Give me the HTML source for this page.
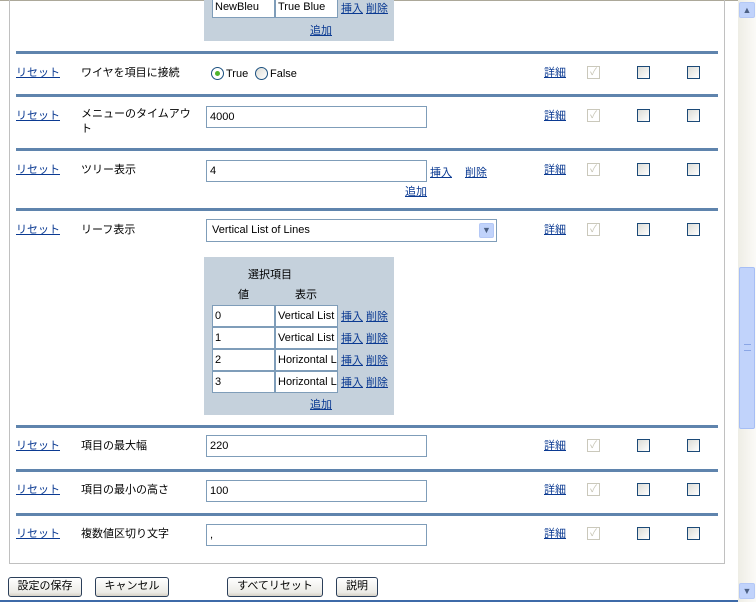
<!DOCTYPE html>
<html><head><meta charset="utf-8"><style>
*{margin:0;padding:0;box-sizing:border-box}
body{width:756px;height:602px;overflow:hidden;background:#fff;font-family:"Liberation Sans","Noto Sans CJK JP",sans-serif;font-size:11px;color:#000;position:relative}
.a{position:absolute;white-space:nowrap}
a,.l{color:#0b3a92;text-decoration:underline}
.sep{position:absolute;left:16px;width:702px;height:3px;background:#5f84ad}
.in{position:absolute;border:1px solid #7f9db9;background:#fff;padding:3px 3px;font-size:11px;height:22px;line-height:14px;overflow:hidden;white-space:nowrap}
.cd{position:absolute;width:13px;height:13px;border:1px solid #cac8bb;background:#fff;color:#c5c2b2;font-size:10px;line-height:11px;text-align:center}
.cb{position:absolute;width:13px;height:13px;border:1px solid #1c4a78;background:linear-gradient(135deg,#dcdcd6,#fff)}
.gt{position:absolute;background:#c5d1dc}
.ti{position:absolute;border:1px solid #7f9db9;background:#fff;height:22px;padding:3px 2px;line-height:14px;overflow:hidden;white-space:nowrap;width:63px}
.btn{position:absolute;top:577px;height:20px;border:1px solid #2b3f5a;border-radius:3px;background:linear-gradient(#fff,#ecebe6 80%,#d6d0c5);font-size:11px;text-align:center;line-height:17px}
</style></head><body>
<div class="a" style="left:0;top:0;width:738px;height:1px;background:#aca899"></div>
<div class="a" style="left:9px;top:0;width:1px;height:563px;background:#c0c0c0"></div>
<div class="a" style="left:724px;top:0;width:1px;height:564px;background:#c0c0c0"></div>
<div class="a" style="left:9px;top:563px;width:716px;height:1px;background:#c0c0c0"></div>

<div class="gt" style="left:204px;top:0;width:190px;height:41px"></div>
<div class="ti" style="left:212px;top:-4px">NewBleu</div>
<div class="ti" style="left:275px;top:-4px">True Blue</div>
<span class="a l" style="left:341px;top:0">挿入</span><span class="a l" style="left:366px;top:0">削除</span>
<span class="a l" style="left:310px;top:22px">追加</span>

<div class="sep" style="top:51px"></div>
<span class="a l" style="left:16px;top:64px">リセット</span>
<span class="a" style="left:81px;top:64px">ワイヤを項目に接続</span>
<div class="a" style="left:211px;top:67px;width:13px;height:13px;border-radius:50%;border:1px solid #1c5180;background:#fff"><div style="position:absolute;left:3px;top:3px;width:5px;height:5px;border-radius:50%;background:#4fb42c"></div></div>
<span class="a" style="left:226px;top:68px">True</span>
<div class="a" style="left:255px;top:67px;width:13px;height:13px;border-radius:50%;border:1px solid #1c5180;background:linear-gradient(135deg,#dcdcd6,#fff)"></div>
<span class="a" style="left:270px;top:68px">False</span>

<div class="sep" style="top:94px"></div>
<span class="a l" style="left:16px;top:107px">リセット</span>
<span class="a" style="left:81px;top:107px;line-height:15px">メニューのタイムアウ<br>ト</span>
<div class="in" style="left:206px;top:106px;width:221px">4000</div>

<div class="sep" style="top:148px"></div>
<span class="a l" style="left:16px;top:161px">リセット</span>
<span class="a" style="left:81px;top:161px">ツリー表示</span>
<div class="in" style="left:206px;top:160px;width:221px">4</div>
<span class="a l" style="left:430px;top:164px">挿入</span><span class="a l" style="left:465px;top:164px">削除</span>
<span class="a l" style="left:405px;top:183px">追加</span>

<div class="sep" style="top:208px"></div>
<span class="a l" style="left:16px;top:221px">リセット</span>
<span class="a" style="left:81px;top:221px">リーフ表示</span>
<div class="in" style="left:206px;top:219px;width:291px;height:23px;padding-left:5px">Vertical List of Lines</div>
<div class="a" style="left:479px;top:223px;width:15px;height:15px;background:#c1d3fb;border:1px solid #b4c8f6;border-radius:2px;color:#4d6185;font-size:9px;text-align:center;line-height:13px">&#9660;</div>

<div class="gt" style="left:204px;top:257px;width:190px;height:158px"></div>
<span class="a" style="left:248px;top:266px">選択項目</span>
<span class="a" style="left:238px;top:286px">値</span><span class="a" style="left:295px;top:286px">表示</span>
<div class="ti" style="left:212px;top:305px">0</div><div class="ti" style="left:275px;top:305px">Vertical List</div>
<div class="ti" style="left:212px;top:327px">1</div><div class="ti" style="left:275px;top:327px">Vertical List</div>
<div class="ti" style="left:212px;top:349px">2</div><div class="ti" style="left:275px;top:349px">Horizontal L</div>
<div class="ti" style="left:212px;top:371px">3</div><div class="ti" style="left:275px;top:371px">Horizontal L</div>
<span class="a l" style="left:341px;top:308px">挿入</span><span class="a l" style="left:366px;top:308px">削除</span>
<span class="a l" style="left:341px;top:330px">挿入</span><span class="a l" style="left:366px;top:330px">削除</span>
<span class="a l" style="left:341px;top:352px">挿入</span><span class="a l" style="left:366px;top:352px">削除</span>
<span class="a l" style="left:341px;top:374px">挿入</span><span class="a l" style="left:366px;top:374px">削除</span>
<span class="a l" style="left:310px;top:396px">追加</span>

<div class="sep" style="top:425px"></div>
<span class="a l" style="left:16px;top:437px">リセット</span>
<span class="a" style="left:81px;top:437px">項目の最大幅</span>
<div class="in" style="left:206px;top:435px;width:221px">220</div>

<div class="sep" style="top:469px"></div>
<span class="a l" style="left:16px;top:481px">リセット</span>
<span class="a" style="left:81px;top:481px">項目の最小の高さ</span>
<div class="in" style="left:206px;top:480px;width:221px">100</div>

<div class="sep" style="top:513px"></div>
<span class="a l" style="left:16px;top:525px">リセット</span>
<span class="a" style="left:81px;top:525px">複数値区切り文字</span>
<div class="in" style="left:206px;top:524px;width:221px">,</div>

<!-- right columns -->
<span class="a l" style="left:544px;top:64px">詳細</span><div class="cd" style="left:587px;top:66px">✓</div><div class="cb" style="left:637px;top:66px"></div><div class="cb" style="left:687px;top:66px"></div>
<span class="a l" style="left:544px;top:107px">詳細</span><div class="cd" style="left:587px;top:109px">✓</div><div class="cb" style="left:637px;top:109px"></div><div class="cb" style="left:687px;top:109px"></div>
<span class="a l" style="left:544px;top:161px">詳細</span><div class="cd" style="left:587px;top:163px">✓</div><div class="cb" style="left:637px;top:163px"></div><div class="cb" style="left:687px;top:163px"></div>
<span class="a l" style="left:544px;top:221px">詳細</span><div class="cd" style="left:587px;top:223px">✓</div><div class="cb" style="left:637px;top:223px"></div><div class="cb" style="left:687px;top:223px"></div>
<span class="a l" style="left:544px;top:437px">詳細</span><div class="cd" style="left:587px;top:439px">✓</div><div class="cb" style="left:637px;top:439px"></div><div class="cb" style="left:687px;top:439px"></div>
<span class="a l" style="left:544px;top:481px">詳細</span><div class="cd" style="left:587px;top:483px">✓</div><div class="cb" style="left:637px;top:483px"></div><div class="cb" style="left:687px;top:483px"></div>
<span class="a l" style="left:544px;top:525px">詳細</span><div class="cd" style="left:587px;top:527px">✓</div><div class="cb" style="left:637px;top:527px"></div><div class="cb" style="left:687px;top:527px"></div>

<div class="btn" style="left:8px;width:74px">設定の保存</div>
<div class="btn" style="left:95px;width:74px">キャンセル</div>
<div class="btn" style="left:227px;width:96px">すべてリセット</div>
<div class="btn" style="left:336px;width:42px">説明</div>
<div class="a" style="left:0;top:600px;width:738px;height:2px;background:#3d6aa8"></div>

<!-- scrollbar -->
<div class="a" style="left:738px;top:0;width:18px;height:602px;background:linear-gradient(90deg,#eeede5,#fbfaf7)"></div>
<div class="a" style="left:739px;top:2px;width:16px;height:16px;background:#c1d3fb;border:1px solid #b4c8f6;border-radius:2px;color:#4d6185;font-size:9px;text-align:center;line-height:14px">&#9650;</div>
<div class="a" style="left:739px;top:267px;width:16px;height:162px;background:#c1d3fb;border:1px solid #a6bef5;border-radius:2px"><div style="position:absolute;left:4px;top:76px;width:7px;height:7px;border-top:1px solid #8aa6e6;border-bottom:1px solid #8aa6e6"></div></div>
<div class="a" style="left:739px;top:583px;width:16px;height:16px;background:#c1d3fb;border:1px solid #b4c8f6;border-radius:2px;color:#4d6185;font-size:9px;text-align:center;line-height:14px">&#9660;</div>
</body></html>
